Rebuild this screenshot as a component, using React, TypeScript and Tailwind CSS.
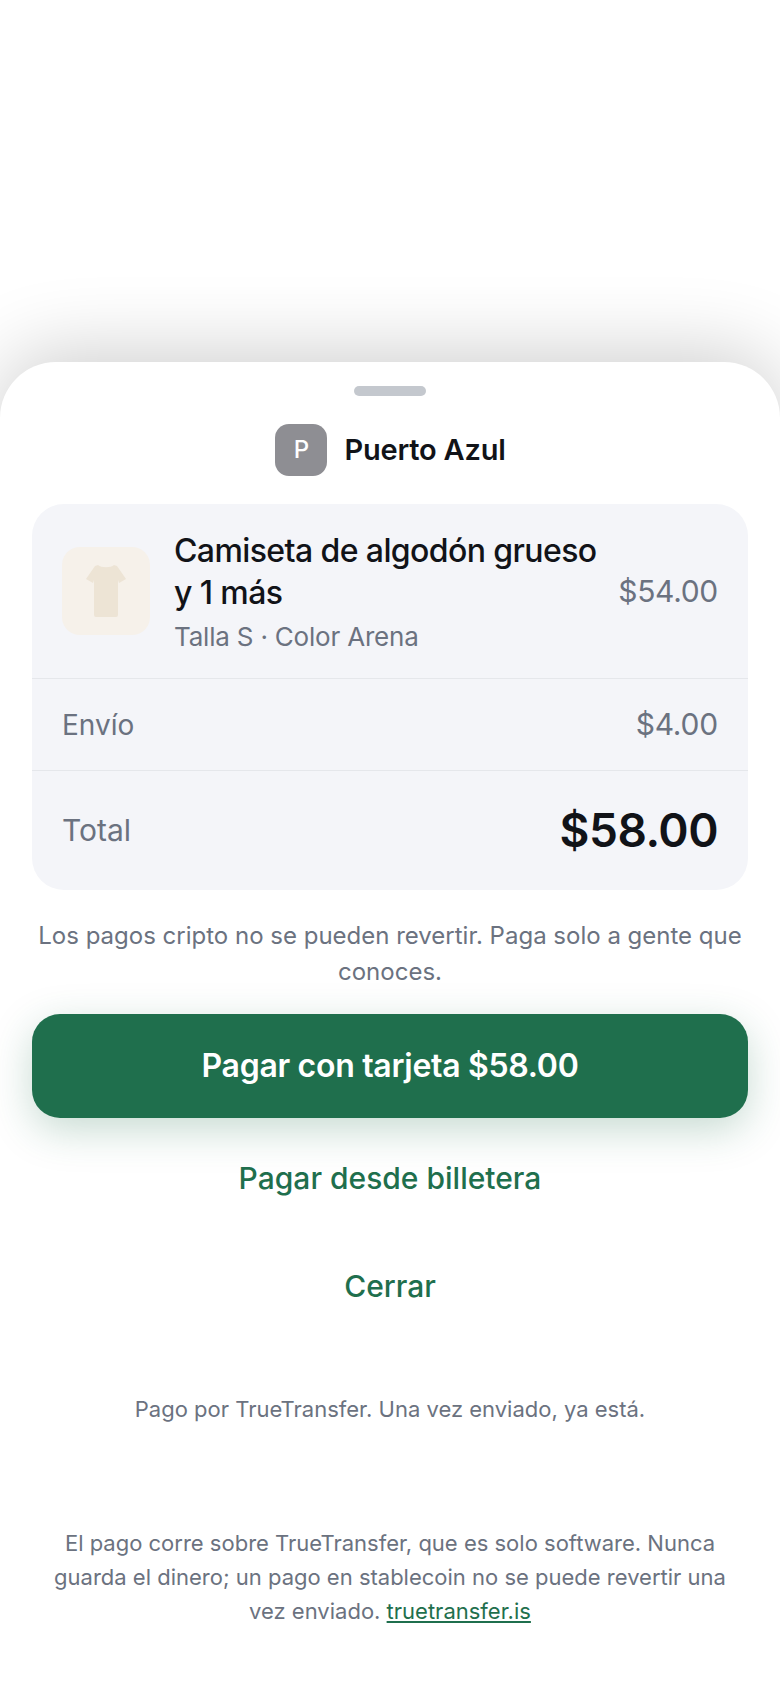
function Tee() {
  return (
    <svg viewBox="0 0 40 52" className="w-[40px] h-[52px]" fill="#ede4d5">
      <path d="M12 0 C15 3 25 3 28 0 L31 1 L40 14 L33 18 L32 15 L32 50 Q32 52 30 52 L10 52 Q8 52 8 50 L8 15 L7 18 L0 14 L9 1 Z" />
    </svg>
  );
}

export default function App() {
  return (
    <div className="w-[780px] h-[1688px] bg-white overflow-hidden pt-[362px] font-['Inter',sans-serif]">
      <div className="h-[1326px] bg-white rounded-t-[56px] shadow-[0_-8px_80px_rgba(0,0,0,0.2)] flex flex-col items-center px-[32px]">
        <div className="mt-[24px] w-[72px] h-[10px] rounded-full bg-[#c4c8ce]" />
        <div className="mt-[28px] flex items-center gap-[17px] ml-[1px]">
          <div className="w-[52px] h-[52px] rounded-[14px] bg-[#8e8e93] text-white text-[24px] font-medium flex items-center justify-center">
            P
          </div>
          <span className="text-[29px] font-semibold tracking-[-0.2px] text-[#111318]">Puerto Azul</span>
        </div>

        <div className="mt-[28px] w-full rounded-[32px] bg-[#f4f5f9]">
          <div className="h-[175px] px-[30px] flex items-center border-b border-[#e5e7eb]">
            <div className="w-[88px] h-[88px] rounded-[18px] bg-[#f6f1ea] flex items-center justify-center shrink-0">
              <Tee />
            </div>
            <div className="ml-[24px] flex-1">
              <div className="mt-[2px] text-[32px] leading-[42px] font-medium tracking-[-0.6px] text-[#111318]">
                Camiseta de algodón grueso<br />y 1 más
              </div>
              <div className="mt-[5px] text-[26px] leading-[36px] tracking-[-0.2px] text-[#6b7280]">Talla S · Color Arena</div>
            </div>
            <span className="text-[30px] tracking-[-0.3px] text-[#6b7280]">$54.00</span>
          </div>
          <div className="h-[92px] px-[30px] flex items-center justify-between border-b border-[#e5e7eb] text-[#6b7280]">
            <span className="text-[28px]">Envío</span>
            <span className="text-[30px] tracking-[-0.2px]">$4.00</span>
          </div>
          <div className="h-[119px] px-[30px] flex items-center justify-between">
            <span className="text-[30px] text-[#6b7280]">Total</span>
            <span className="text-[46px] font-semibold tracking-[-0.5px] text-[#111318]">$58.00</span>
          </div>
        </div>

        <p className="mt-[28px] text-[24px] leading-[36px] text-[#6b7280] text-center">
          Los pagos cripto no se pueden revertir. Paga solo a gente que conoces.
        </p>

        <button className="mt-[24px] w-full h-[104px] shrink-0 rounded-[28px] bg-[#1f6f4d] text-white text-[32px] font-semibold tracking-[-0.3px] shadow-[0_12px_40px_rgba(31,111,77,0.25)]">
          Pagar con tarjeta $58.00
        </button>
        <button className="mt-[10px] h-[100px] w-full shrink-0 text-[30px] font-medium text-[#1f6f4d]">Pagar desde billetera</button>
        <button className="mt-[8px] h-[100px] w-full shrink-0 text-[30px] font-medium text-[#1f6f4d]">Cerrar</button>

        <p className="mt-[56px] text-[22px] leading-[34px] text-[#6b7280] text-center">
          Pago por TrueTransfer. Una vez enviado, ya está.
        </p>
        <p className="mt-[100px] px-[14px] text-[22px] leading-[34px] text-[#6b7280] text-center">
          El pago corre sobre TrueTransfer, que es solo software. Nunca guarda el dinero; un pago en stablecoin no se puede revertir una vez enviado.{" "}
          <a className="text-[#1f6f4d] underline">truetransfer.is</a>
        </p>
      </div>
    </div>
  );
}
